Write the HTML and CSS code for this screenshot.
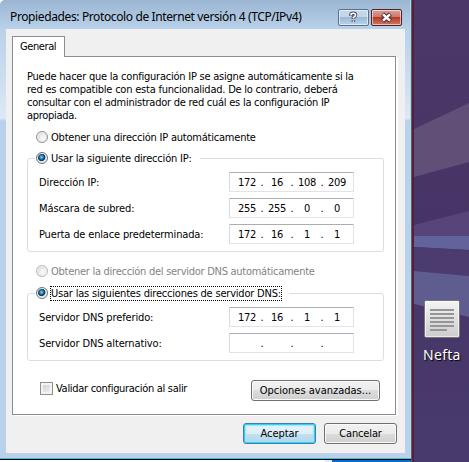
FILE: index.html
```
<!DOCTYPE html>
<html lang="es">
<head>
<meta charset="utf-8">
<title>Propiedades</title>
<link rel="stylesheet" href="styles.css">
</head>
<body>
<main class="screen">
  <section class="left">
    <div class="window">
      <header class="titlebar">
        <span class="title">Propiedades: Protocolo de Internet versión 4 (TCP/IPv4)</span>
        <span class="caption help"><svg width="13" height="13" viewBox="0 0 13 13"><path d="M4 5V3.5Q4 2.2 6.3 2.2T8.6 4Q8.6 5.2 6.4 6.5V8M6.4 9.2V11" fill="none" stroke="#414b62" stroke-width="3.5"/><path d="M4 4.6V3.5Q4 2.2 6.3 2.2T8.6 4Q8.6 5.2 6.4 6.5V7.6M6.4 9.4V10.8" fill="none" stroke="#fff" stroke-width="1.6"/></svg></span>
        <span class="caption close"><svg width="13" height="11" viewBox="0 0 13 11"><path d="M2.5 2L10.5 9M10.5 2L2.5 9" stroke="#52353e" stroke-width="4.6"/><path d="M3 2.4L10 8.6M10 2.4L3 8.6" stroke="#fff" stroke-width="2.5"/></svg></span>
      </header>
      <div class="client">
        <div class="tab"><span class="t-general">General</span></div>
        <div class="panel">
          <p class="intro"><span class="i1">Puede hacer que la configuración IP se asigne automáticamente si la</span><br><span class="i2">red es compatible con esta funcionalidad. De lo contrario, deberá</span><br><span class="i3">consultar con el administrador de red cuál es la configuración IP</span><br><span class="i4">apropiada.</span></p>
          <div class="choice"><i class="radio"></i><span class="c1">Obtener una dirección IP automáticamente</span></div>
          <div class="group ip">
            <div class="legend"><i class="radio on"></i><span class="c2">Usar la siguiente dirección IP:</span></div>
            <div class="row"><span class="r1">Dirección IP:</span><div class="field"><b>172</b><em>.</em><b>16</b><em>.</em><b>108</b><em>.</em><b>209</b></div></div>
            <div class="row"><span class="r2">Máscara de subred:</span><div class="field"><b>255</b><em>.</em><b>255</b><em>.</em><b>0</b><em>.</em><b>0</b></div></div>
            <div class="row"><span class="r3">Puerta de enlace predeterminada:</span><div class="field"><b>172</b><em>.</em><b>16</b><em>.</em><b>1</b><em>.</em><b>1</b></div></div>
          </div>
          <div class="choice off"><i class="radio"></i><span class="c3">Obtener la dirección del servidor DNS automáticamente</span></div>
          <div class="group dns">
            <div class="legend"><i class="radio on"></i><span class="c4 focus">Usar las siguientes direcciones de servidor DNS:</span></div>
            <div class="row"><span class="r4">Servidor DNS preferido:</span><div class="field"><b>172</b><em>.</em><b>16</b><em>.</em><b>1</b><em>.</em><b>1</b></div></div>
            <div class="row"><span class="r5">Servidor DNS alternativo:</span><div class="field"><b></b><em>.</em><b></b><em>.</em><b></b><em>.</em><b></b></div></div>
          </div>
          <div class="bottom">
            <span class="validate"><i class="check"></i><span class="v1">Validar configuración al salir</span></span>
            <span class="btn adv"><span class="b1">Opciones avanzadas...</span></span>
          </div>
        </div>
        <footer class="actions"><span class="btn primary"><span class="b2">Aceptar</span></span><span class="btn"><span class="b3">Cancelar</span></span></footer>
      </div>
    </div>
    <div class="under"></div>
  </section>
  <section class="desktop">
    <svg class="wall" width="55" height="462" viewBox="0 0 55 462">
      <defs><linearGradient id="w" x2="0" y2="1"><stop offset="0" stop-color="#4c3868"/><stop offset=".5" stop-color="#483366"/><stop offset="1" stop-color="#483b6c"/></linearGradient></defs>
      <path fill="url(#w)" d="M0 0H55V462H0z"/>
      <path fill="#624f78" d="M0 129L55 103V162L0 177z"/>
      <path fill="#57457a" d="M0 225L55 211V240L0 236z"/>
      <path fill="#61639a" d="M0 236L55 236V250L0 247z"/>
      <path fill="#4b3b6e" d="M0 247L55 250V276L0 271z"/>
      <path fill="#5f5d90" d="M0 271L55 276V317L0 304z"/>
    </svg>
    <div class="shortcut">
      <svg width="36" height="39" viewBox="0 0 36 39"><defs><linearGradient id="p" x2="0" y2="1"><stop stop-color="#f4f4f4"/><stop offset="1" stop-color="#ccc"/></linearGradient></defs><rect x=".5" y=".5" width="35" height="37" rx="2" fill="url(#p)" stroke="#77727c"/><path d="M1.5 1.5H34.5V36.5H1.5z" fill="none" stroke="#fff" stroke-opacity=".6"/><path d="M6 10h24M6 14h24M6 18h24M6 22h24M6 26h24M6 30h17" stroke="#969696" stroke-width="2"/></svg>
      <span class="name">Nefta</span>
    </div>
  </section>
</main>
</body>
</html>
```
FILE: styles.css
```
* { box-sizing: border-box; }
body { margin: 0; font: 11px/13px "DejaVu Sans Condensed", "DejaVu Sans", sans-serif; font-stretch: condensed; color: #000; }
.screen { display: flex; width: 469px; height: 462px; overflow: hidden; background: #fff; }
.left { width: 414px; border-right: 2px solid #571f3c; box-shadow: inset -1px 0 #5f6068; display: flex; flex-direction: column; }
.window { width: 411px; height: 460px; padding: 0 6px 6px; background: linear-gradient(#9bb6d3, #b9d1ea 29px, #cfdff0 85px, #dde9f6 118px, #b9d1ea 121px); border-bottom: 1px solid #000; box-shadow: inset 0 -1px #35c6dc, inset -1px 0 #a5dcef; border-top-left-radius: 5px; }
.titlebar { height: 29px; display: flex; align-items: flex-start; padding-top: 9px; }
.title { width: 326px; margin-left: 4px; padding-top: 1px; white-space: nowrap; font: 12px/13px "Noto Sans", sans-serif; letter-spacing: -.38px; }
.caption { width: 31px; height: 17px; margin-left: 2px; display: flex; align-items: center; justify-content: center; border: 1px solid #58718d; border-radius: 2px; box-shadow: inset 0 0 0 1px rgba(255,255,255,.55); }
.help { background: linear-gradient(#c3d7eb 50%, #9bb8d5 50%, #b9d3ec); }
.close { border-color: #50222b; background: linear-gradient(#dda197, #cc7567 50%, #b43b28 50%, #d1795d); }
.client { height: 424px; width: 399px; padding: 7px 0 0 6px; background: #f0f0f0; }
.tab { width: 53px; height: 21px; margin-bottom: -1px; padding: 3px 0 0 7px; position: relative; background: #fff; border: 1px solid #898c95; border-bottom: 0; }
.panel { width: 384px; height: 359px; padding: 13px 12px 0 14px; background: #fff; border: 1px solid #898c95; box-shadow: 2px 1px #fff; }
.intro { margin: 0; height: 60px; white-space: nowrap; }
.choice, .legend { display: flex; align-items: center; height: 14px; gap: 3px; white-space: nowrap; }
.choice { padding-left: 9px; }
.radio { width: 12px; height: 12px; border-radius: 50%; border: 1px solid #8e8f8f; background: radial-gradient(circle at 60% 60%, #f6f6f6 20%, #c6cacf); box-shadow: inset 0 0 0 1px #f4f4f4; flex: none; }
.radio.on { border-color: #6d7680; background: radial-gradient(circle at 45% 42%, #8fdcf5 0, #2384b4 22%, #0c3350 42%, #d8dfe5 54%, #e8ecef); }
.off { color: #838383; }
.off .radio { border-color: #b9babb; }
.group { width: 357px; border: 1px solid #d5dfe5; border-radius: 3px; }
.ip { height: 94px; margin-top: 14px; }
.dns { height: 68px; margin-top: 15px; }
.legend { width: max-content; margin: -8px 0 7px 7px; padding: 0 8px 0 1px; background: #fff; }
.ip + .choice { margin-top: 12px; }
.row { display: flex; height: 20px; margin-bottom: 6px; padding-left: 11px; align-items: center; white-space: nowrap; }
.row > span { width: 190px; }
.field { width: 125px; height: 20px; display: flex; align-items: center; padding: 0 6px; border: 1px solid #e2e3ea; border-top-color: #abadb3; border-left-color: #d5dae3; border-radius: 1px; }
.field b { width: 22px; text-align: center; font-weight: normal; flex: none; letter-spacing: -.3px; }
.field em { width: 8px; text-align: center; font-style: normal; flex: none; }
.focus { outline: 1px dotted #000; outline-offset: 0; }
.t-general { letter-spacing: -.4px; }
.i1 { letter-spacing: -.23px; }
.i2 { letter-spacing: -.22px; }
.i3 { letter-spacing: -.25px; }
.i4 { letter-spacing: -.3px; }
.c1 { letter-spacing: -.22px; }
.c2 { letter-spacing: -.19px; }
.c3 { letter-spacing: -.27px; }
.c4 { letter-spacing: -.2px; }
.r1, .r2 { letter-spacing: -.1px; }
.r3 { letter-spacing: -.16px; }
.r4, .r5 { letter-spacing: -.13px; }
.v1 { letter-spacing: -.3px; }
.b2 { letter-spacing: -.05px; }
.b3 { letter-spacing: -.15px; }
.bottom { display: flex; justify-content: space-between; padding: 19px 3px 0 13px; }
.validate { display: flex; height: 17px; align-items: center; gap: 3px; white-space: nowrap; }
.check { width: 13px; height: 13px; border: 1px solid #8e8f8f; background: linear-gradient(135deg, #c5c9d0, #f8f8f8); box-shadow: inset 0 0 0 2px #f4f4f4; }
.btn { width: 73px; height: 21px; display: flex; align-items: center; justify-content: center; white-space: nowrap; border: 1px solid #707070; border-radius: 3px; background: linear-gradient(#f2f2f2, #ebebeb 50%, #ddd 50%, #cfcfcf); box-shadow: inset 0 0 0 1px #fafafa; }
.adv { width: 129px; }
.actions { display: flex; gap: 8px; justify-content: flex-end; padding: 8px 8px 0 0; }
.primary { border-color: #3c7fb1; background: linear-gradient(#eaf4fa, #dceef8 50%, #c3e1f1 50%, #b2d6eb); box-shadow: inset 0 0 0 1px #36cef7, inset 0 0 1px 2px #9be6fa; }
.under { height: 2px; width: 411px; background: linear-gradient(90deg, #fff 325px, #dceefb 325px 332px, #0a6acb 332px); }
.desktop { width: 55px; height: 462px; display: grid; }
.wall { grid-area: 1 / 1; }
.shortcut { grid-area: 1 / 1; z-index: 1; padding: 300px 0 0 10px; display: flex; flex-direction: column; align-items: flex-start; }
.name { margin: 7px 0 0 -1px; font: 14px/18px "Noto Sans", sans-serif; letter-spacing: .3px; color: #fff; text-shadow: 1px 1px 1px #000; }
```
